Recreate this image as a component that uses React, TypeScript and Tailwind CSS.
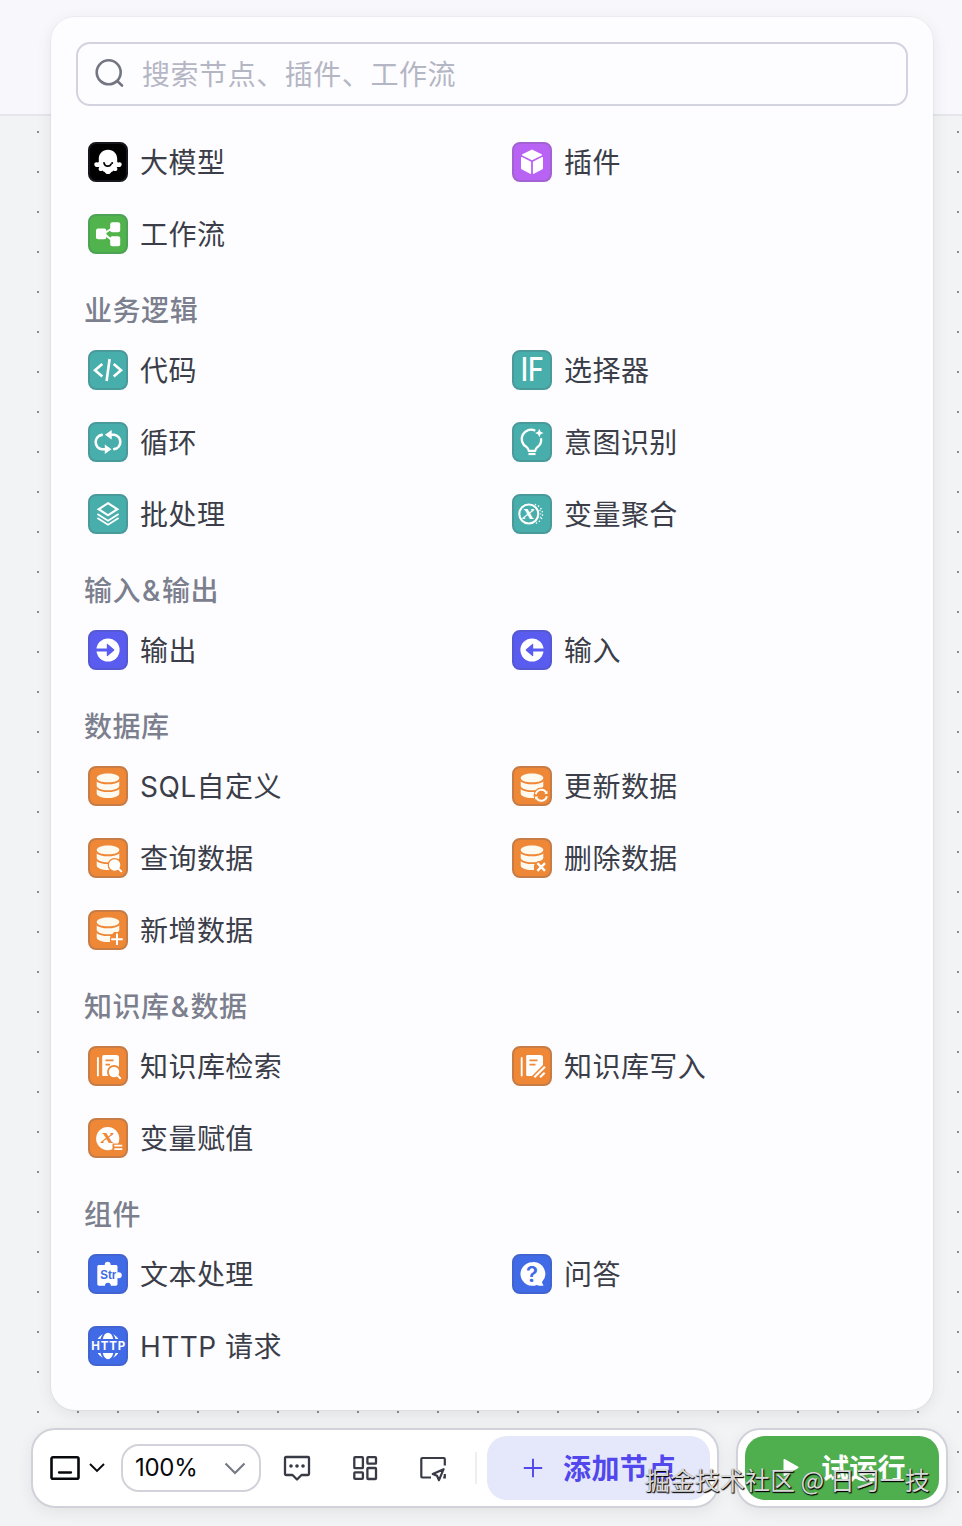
import type { ReactNode } from 'react';

const DB_TOP = 'M8.7 11.9c0-2.5 5-4.4 11.3-4.4s11.3 1.9 11.3 4.4-5 4.4-11.3 4.4S8.7 14.4 8.7 11.9z';
const DB_MID = 'M8.7 15.2c1.6 1.9 6 3.1 11.3 3.1s9.7-1.2 11.3-3.1v4.6c0 2.6-5 4.5-11.3 4.5s-11.3-1.9-11.3-4.5z';
const DB_LOW = 'M8.7 22.9c1.6 1.9 6 3.1 11.3 3.1s9.7-1.2 11.3-3.1v4.6c0 2.6-5 4.5-11.3 4.5s-11.3-1.9-11.3-4.5z';

const ORANGE = '#ee8736';
const BLUE = '#416be6';

function Database() {
  return (
    <g fill="#fffaf0">
      <path d={DB_TOP} />
      <path d={DB_MID} />
      <path d={DB_LOW} />
    </g>
  );
}

const glyphs: Record<string, ReactNode> = {
  llm: (
    <>
      <path fill="#fff" d="M20 7.800c-5.500 0-9.200 4-9.200 9v3c0 .6-.6.9-1.400.7-1.700-.5-3.100.4-3.100 1.900 0 1.700 1.500 2.700 3.500 2.600h1.600c-.9 1-1 2.300-.4 3.200.8 1.100 2.400 1.200 3.600.3.400.9 1.200 1.400 2.100 1.400.5 1.200 1.700 2.100 3.300 2.100s2.800-.9 3.300-2.100c.9 0 1.700-.5 2.100-1.400 1.200.9 2.800.8 3.600-.3.600-.9.500-2.200-.4-3.200h1.600c2 .1 3.500-.9 3.500-2.600 0-1.500-1.400-2.400-3.100-1.900-.8.2-1.400-.1-1.400-.7v-3c0-5-3.700-9-9.200-9z" />
      <path d="M16 20.800c.4 2.200 1.800 3.400 3.800 3.400 1.600 0 2.700-.8 3.300-2.100" fill="none" stroke="#000" strokeWidth="1.700" strokeLinecap="round" />
      <circle cx="24.200" cy="21" r="1" fill="#000" />
    </>
  ),
  plugin: (
    <g fill="#fff">
      <path d="M19 7.900a2 2 0 0 1 2 0l8.600 4.300c.5.300.5.900 0 1.200L20 18.300l-9.600-4.900c-.5-.3-.5-.9 0-1.200z" />
      <path d="M9 15.600c0-.5.500-.8 1-.6l9.100 4.700v11.500c0 .6-.5.900-1 .6L10 27.500c-.7-.4-1-.9-1-1.600z" />
      <path d="M31 15.600c0-.5-.5-.8-1-.6l-9.100 4.700v11.500c0 .6.500.9 1 .6l8.100-4.300c.7-.4 1-.9 1-1.600z" />
    </g>
  ),
  workflow: (
    <g fill="#fff">
      <rect x="8" y="14.500" width="10.300" height="10.800" rx="2" />
      <rect x="22.200" y="8.200" width="10" height="10" rx="2" />
      <rect x="22.200" y="22.200" width="10" height="10" rx="2" />
      <path d="M23 15l-7 4.500 7 6" fill="none" stroke="#fff" strokeWidth="1.900" />
    </g>
  ),
  code: (
    <path d="M14.300 14l-7.300 6.300 7.300 6.300M25.700 14l7.300 6.300-7.300 6.300M21.600 9l-3 22" fill="none" stroke="#fff" strokeWidth="2.600" />
  ),
  selector: (
    <text x="8.800" y="31.400" textLength="23" lengthAdjust="spacingAndGlyphs" fontSize="32" fontWeight="500" fontFamily="Inter, sans-serif" fill="#fff">IF</text>
  ),
  loop: (
    <>
      <path d="M13.800 12.900a7.300 7.300 0 0 0 0 14.400H18M26.200 27.100a7.300 7.300 0 0 0 0-14.400H22" fill="none" stroke="#fff" strokeWidth="2.600" strokeLinecap="round" />
      <path d="M23.700 8v9.400l-6.700-4.700zM16.800 22.600V32l6.700-4.700z" fill="#fff" />
    </>
  ),
  intent: (
    <>
      <path d="M23.300 8.800A9.200 9.200 0 0 0 14.600 25.100c1.500 1.200 2 2 2.200 3.700h6.400c.2-1.700.7-2.500 2.200-3.700a9.200 9.200 0 0 0 3.600-8.900" fill="none" stroke="#fff" strokeWidth="2.300" strokeLinejoin="round" />
      <path d="M16.500 32h7" stroke="#fff" strokeWidth="2.200" />
      <path d="M27.300 6.700l1.300 3 3 1.300-3 1.300-1.300 3-1.300-3-3-1.300 3-1.300z" fill="#fff" />
    </>
  ),
  batch: (
    <g fill="none" stroke="#fff">
      <path d="M20 9.200l9.300 6L20 21.300l-9.300-6.100z" strokeWidth="2.200" />
      <path d="M9.400 20l10.600 6.800L30.600 20M9.400 24l10.600 6.800L30.600 24" strokeWidth="1.800" />
    </g>
  ),
  aggregate: (
    <>
      <circle cx="16.800" cy="20" r="9.500" fill="none" stroke="#fff" strokeWidth="2.100" />
      <path d="M23.500 10.600a9.800 9.800 0 0 1 0 18.800" fill="none" stroke="#fff" strokeWidth="1.600" strokeDasharray="0 3.400" strokeLinecap="round" />
      <path d="M28 16.500a9 9 0 0 1 0 7.500" fill="none" stroke="#fff" strokeWidth="1.300" strokeDasharray="0 3.400" strokeLinecap="round" />
      <text x="10.600" y="24.500" textLength="12" lengthAdjust="spacingAndGlyphs" fontSize="20" fontWeight="700" fontStyle="italic" fontFamily="Liberation Serif, serif" fill="#fff">x</text>
    </>
  ),
  output: (
    <>
      <circle cx="20" cy="20" r="11.600" fill="#fff" />
      <path d="M7 18.600h11.800v-4.200c0-.6.500-.8.900-.4l6.500 5.500c.3.300.3.700 0 1l-6.500 5.500c-.4.400-.9.200-.9-.4v-4.200H7z" fill="#5a5cf0" />
    </>
  ),
  input: (
    <>
      <circle cx="20" cy="20" r="11.600" fill="#fff" />
      <path d="M33 18.600H21.200v-4.200c0-.6-.5-.8-.9-.4l-6.500 5.500c-.3.300-.3.700 0 1l6.500 5.500c.4.400.9.200.9-.4v-4.200H33z" fill="#5a5cf0" />
    </>
  ),
  sql: <Database />,
  dbUpdate: (
    <>
      <Database />
      <circle cx="29.300" cy="29.300" r="7.700" fill={ORANGE} />
      <path d="M23.800 28.300a5.600 5.600 0 0 1 10.300-1.800M34.800 30.300a5.600 5.600 0 0 1-10.300 1.800" fill="none" stroke="#fff" strokeWidth="2" />
      <path d="M32.300 28h3.200v-3.200zM26.300 30.600h-3.200v3.200z" fill="#fff" />
    </>
  ),
  dbQuery: (
    <>
      <Database />
      <circle cx="26.600" cy="27" r="7" fill={ORANGE} />
      <circle cx="26.600" cy="27" r="5.700" fill="#fff" />
      <path d="M30 30.200l3.300 3.200" stroke="#fff" strokeWidth="2" strokeLinecap="round" />
    </>
  ),
  dbDelete: (
    <>
      <Database />
      <path d="M22 36v-9l4-4h8v13z" fill={ORANGE} />
      <path d="M25.400 25.100l7.600 7.800M33 25.100l-7.600 7.800" stroke="#fff" strokeWidth="2.300" />
    </>
  ),
  dbAdd: (
    <>
      <Database />
      <path d="M22 36v-9l4-5h8v14z" fill={ORANGE} />
      <path d="M29 23.500v11.600M23.200 29.300h11.600" stroke="#fff" strokeWidth="2" />
    </>
  ),
  kbSearch: (
    <>
      <path d="M9.900 12v17.500" stroke="#fff" strokeWidth="1.900" strokeLinecap="round" />
      <path d="M16 9h12.500A2.500 2.500 0 0 1 31 11.500V30H15.500c-.8 0-1.300-.5-1.300-1.300V11c0-1.200.7-2 1.800-2z" fill="#fff" />
      <path d="M17.500 14.300h8M17.500 18.700h4.500" stroke={ORANGE} strokeWidth="1.800" />
      <circle cx="26" cy="26" r="7" fill={ORANGE} />
      <circle cx="26" cy="26" r="5.200" fill="#fff" />
      <path d="M29 29l3.200 3.200" stroke="#fff" strokeWidth="2" strokeLinecap="round" />
    </>
  ),
  kbWrite: (
    <>
      <path d="M9.700 12v17.500" stroke="#fff" strokeWidth="1.900" strokeLinecap="round" />
      <path d="M15.500 9h13c1.500 0 2.500 1 2.500 2.500v8L20.500 30h-5c-.8 0-1.300-.5-1.300-1.300V10.300c0-.8.500-1.300 1.300-1.300z" fill="#fff" />
      <path d="M17.500 14.300h8M17.500 18.700h6" stroke={ORANGE} strokeWidth="1.800" />
      <path d="M20.500 33L35 18.500" stroke={ORANGE} strokeWidth="5" />
      <path d="M22.300 31.300L33 20.800M28 31.300l4.700-4.500" stroke="#fff" strokeWidth="2.200" />
    </>
  ),
  assign: (
    <>
      <circle cx="19.700" cy="20.600" r="11.600" fill="#fff" />
      <text x="13" y="25.300" textLength="13" lengthAdjust="spacingAndGlyphs" fontSize="22" fontWeight="700" fontStyle="italic" fontFamily="Liberation Serif, serif" fill={ORANGE}>x</text>
      <path d="M24.500 25.500h11v8h-11z" fill={ORANGE} />
      <path d="M26.300 27.600h8M26.300 31.200h8" stroke="#fff" strokeWidth="1.700" />
    </>
  ),
  text: (
    <>
      <path d="M11 11h5.700c0-2 1.200-3.200 3-3.200s3 1.200 3 3.200h5.100c1 0 1.700.7 1.700 1.700v5.800c2.400-.8 4.300.5 4.300 2.800s-1.900 3.600-4.300 2.800v5.900c0 1-.7 1.700-1.700 1.700h-5c0-2-1-3-2.900-3S17 29.700 17 31.700h-6c-1 0-1.700-.7-1.700-1.700V12.700c0-1 .7-1.700 1.700-1.700z" fill="#fff" />
      <text x="12.300" y="25.200" textLength="16" lengthAdjust="spacingAndGlyphs" fontSize="12" fontWeight="700" fontFamily="Liberation Sans, sans-serif" fill={BLUE}>Str</text>
    </>
  ),
  qa: (
    <>
      <path d="M20 8.200a11.800 11.800 0 1 0 4.800 22.700c2 .8 4 1 6.200.8.500 0 .6-.4.300-.7-.8-.9-1.200-1.900-1.300-3A11.800 11.800 0 0 0 20 8.200z" fill="#fff" />
      <text x="20" y="27.600" textAnchor="middle" fontSize="22" fontWeight="600" fontFamily="Inter, sans-serif" fill={BLUE}>?</text>
    </>
  ),
  http: (
    <>
      <g fill="#fff">
        <path d="M14.800 13c.8-4 2.800-6.200 5.200-6.200s4.400 2.200 5.200 6.200zM14.800 27c.8 4 2.800 6.200 5.200 6.200s4.400-2.200 5.200-6.200z" />
        <path d="M9.700 13c1.300-2 3-3.700 5.200-4.700-1.200 1.500-2 3-2.400 4.700zM30.300 13c-1.300-2-3-3.700-5.200-4.700 1.200 1.500 2 3 2.400 4.700zM9.700 27c1.300 2 3 3.700 5.200 4.700-1.200-1.500-2-3-2.400-4.700zM30.300 27c-1.300 2-3 3.700-5.200 4.700 1.200-1.500 2-3 2.400-4.700z" />
      </g>
      <text x="3.200" y="24.100" textLength="34" fontSize="11.500" fontWeight="700" fontFamily="Inter, sans-serif" fill="#fff">HTTP</text>
    </>
  ),
};

type Tone = 'black' | 'purple' | 'green' | 'teal' | 'indigo' | 'orange' | 'blue';

const tones: Record<Tone, string> = {
  black: 'bg-black border-[#15171c]',
  purple: 'bg-[#b963f4] border-[#a362d2]',
  green: 'bg-[#50b34b] border-[#4ca255]',
  teal: 'bg-[#48aeac] border-[#4a9a9b]',
  indigo: 'bg-[#5a5cf0] border-[#5558d3]',
  orange: 'bg-[#ee8736] border-[#c87c45]',
  blue: 'bg-[#416be6] border-[#4264d0]',
};

type Item = { icon: string; label: string };
type Section = { title?: string; groups: { tone: Tone; item: Item }[] };

const of = (tone: Tone, ...items: [string, string][]) =>
  items.map(([icon, label]) => ({ tone, item: { icon, label } }));

const sections: Section[] = [
  { groups: [...of('black', ['llm', '大模型']), ...of('purple', ['plugin', '插件']), ...of('green', ['workflow', '工作流'])] },
  {
    title: '业务逻辑',
    groups: of('teal', ['code', '代码'], ['selector', '选择器'], ['loop', '循环'], ['intent', '意图识别'], ['batch', '批处理'], ['aggregate', '变量聚合']),
  },
  { title: '输入&输出', groups: of('indigo', ['output', '输出'], ['input', '输入']) },
  {
    title: '数据库',
    groups: of('orange', ['sql', 'SQL自定义'], ['dbUpdate', '更新数据'], ['dbQuery', '查询数据'], ['dbDelete', '删除数据'], ['dbAdd', '新增数据']),
  },
  { title: '知识库&数据', groups: of('orange', ['kbSearch', '知识库检索'], ['kbWrite', '知识库写入'], ['assign', '变量赋值']) },
  { title: '组件', groups: of('blue', ['text', '文本处理'], ['qa', '问答'], ['http', 'HTTP 请求']) },
];

function NodeItem({ tone, item }: { tone: Tone; item: Item }) {
  return (
    <div className="flex h-[72px] items-center gap-3 pl-3">
      <div className={`size-10 shrink-0 rounded-lg border-2 ${tones[tone]}`}>
        <svg viewBox="2 2 36 36" className="size-9 overflow-visible">
          {glyphs[item.icon]}
        </svg>
      </div>
      <span className="whitespace-pre pt-0.5 text-[28px] leading-10 tracking-[0.450px] text-[#3b3e49]">{item.label}</span>
    </div>
  );
}

function Panel() {
  return (
    <div className="ml-[51px] mt-[17px] flex h-[1393px] w-[882px] flex-col rounded-[24px] bg-[#fdfdff] px-[25px] pt-[25px] shadow-[0_0_0_1px_rgba(60,60,90,0.04),0_4px_16px_rgba(0,0,0,0.08)]">
      <div className="flex h-16 shrink-0 items-center rounded-[14px] border-2 border-[#d2d3df] px-4">
        <svg viewBox="0 0 32 32" className="size-8" fill="none" stroke="#737583" strokeWidth="2.600" strokeLinecap="round">
          <circle cx="14.700" cy="14.300" r="12" />
          <path d="M23.500 23.300l4.500 4.200" />
        </svg>
        <span className="ml-4 pt-0.5 text-[28px] leading-10 tracking-[0.550px] text-[#b5b6c4]">搜索节点、插件、工作流</span>
      </div>
      <div className="mt-5 w-[848px]">
        {sections.map((s, i) => (
          <section key={i}>
            {s.title && (
              <h3 className="h-16 pl-2 pt-[17px] text-[28px] font-medium leading-[48px] tracking-[0.550px] text-[#7c7f8d]">
                {s.title.split('&').map((part, n) => (
                  <span key={n}>
                    {n > 0 && <span className="pr-px pl-px">&amp;</span>}
                    {part}
                  </span>
                ))}
              </h3>
            )}
            <div className="grid grid-cols-2">
              {s.groups.map((g) => (
                <NodeItem key={g.item.icon} {...g} />
              ))}
            </div>
          </section>
        ))}
      </div>
    </div>
  );
}

function Toolbar() {
  return (
    <div className="ml-[31px] mt-[18px] flex gap-[17px]">
      <div className="flex h-20 w-[688px] items-center rounded-[24px] border-2 border-[#d0d1d9] bg-white pl-4 shadow-[0_4px_16px_rgba(0,0,0,0.07)]">
        <svg viewBox="0 0 32 26" className="h-[26px] w-8" fill="none" stroke="#08090d" strokeWidth="2.600">
          <rect x="2.500" y="2.300" width="27" height="21.400" rx="1.500" />
          <path d="M10 17.500h12" strokeWidth="2.300" strokeLinecap="round" />
        </svg>
        <svg viewBox="0 0 18 12" className="ml-[7px] h-3 w-[18px]" fill="none" stroke="#08090d" strokeWidth="1.900">
          <path d="M2 2l7 7 7-7" />
        </svg>
        <div className="ml-[15px] flex h-12 w-[140px] items-center justify-between rounded-[18px] border-2 border-[#d2d3da] pl-3 pr-[13px]">
          <span className="font-[Inter] text-[24px] leading-8 tracking-[-0.300px] text-[#08090d]">100%</span>
          <svg viewBox="0 0 22 14" className="h-3.5 w-[22px]" fill="none" stroke="#777a84" strokeWidth="2.200">
            <path d="M1.500 2.500l9.500 9.500 9.500-9.500" />
          </svg>
        </div>
        <svg viewBox="0 0 28 28" className="ml-[22px] size-7" fill="none" stroke="#383a45" strokeWidth="2.300">
          <path d="M3 3h22c.6 0 1 .4 1 1v16c0 .6-.4 1-1 1h-6.500L14 25.500 9.500 21H3c-.6 0-1-.4-1-1V4c0-.6.400-1 1-1z" strokeLinejoin="round" />
          <path d="M8 12h.01M14 12h.01M20 12h.01" strokeWidth="3.600" strokeLinecap="round" />
        </svg>
        <svg viewBox="0 0 28 28" className="ml-10 size-7" fill="none" stroke="#383a45" strokeWidth="2.300">
          <rect x="3.300" y="3.200" width="8.600" height="11" rx=".8" />
          <rect x="16.400" y="3.200" width="8.600" height="6.500" rx=".8" />
          <rect x="3.300" y="18.400" width="8.600" height="6.500" rx=".8" />
          <rect x="16.400" y="14" width="8.600" height="11" rx=".8" />
        </svg>
        <svg viewBox="0 0 28 28" className="ml-10 size-7" fill="none" stroke="#383a45" strokeWidth="2.200">
          <path d="M12 23.500H3.300c-.6 0-1-.4-1-1V5c0-.6.400-1 1-1h21.500c.6 0 1 .4 1 1v6.500M25.800 20v3.500h-1.600" />
          <path d="M24.600 15.200l-10.800 4.800 4.200 1.700 2 4.500z" strokeLinejoin="round" />
        </svg>
        <div className="ml-[28px] h-8 w-[2px] bg-[#ededf2]" />
        <div className="ml-[10px] flex h-16 w-[223px] items-center rounded-[20px] bg-[#e5e7fb] pl-9">
          <svg viewBox="0 0 20 20" className="size-5" stroke="#5147ec" strokeWidth="1.900">
            <path d="M10 .8v18.400M.8 10h18.400" />
          </svg>
          <span className="ml-5 pt-0.5 text-[28px] font-semibold leading-10 tracking-[0.400px] text-[#5147ec]">添加节点</span>
        </div>
      </div>
      <div className="flex h-20 w-[212px] items-center rounded-[24px] border-2 border-[#d0d1d9] bg-white pl-[7px] shadow-[0_4px_16px_rgba(0,0,0,0.07)]">
        <div className="flex h-16 w-[194px] items-center rounded-[20px] bg-[#4fae4d] pl-[37px]">
          <svg viewBox="0 0 18 20" className="h-5 w-[18px]" fill="#fff">
            <path d="M1.500 1.700c0-.7.600-1 1.200-.7l13.500 7.700c.6.300.6 1 0 1.300L2.700 18c-.6.300-1.200 0-1.200-.7z" />
          </svg>
          <span className="ml-[21px] pt-0.5 text-[28px] font-semibold leading-10 tracking-[0.300px] text-white">试运行</span>
        </div>
      </div>
    </div>
  );
}

export default function App() {
  return (
    <div className="relative isolate h-[1526px] w-[962px] overflow-hidden bg-[#f2f3f5] font-[Inter,'Noto_Sans_CJK_SC',sans-serif]">
      <div className="absolute inset-0 -z-10">
        <div className="h-[116px] border-b-2 border-[#e5e5ec] bg-[#f8f8fc]" />
        <svg className="h-[1410px] w-full">
          <defs>
            <pattern id="dots" x="37" y="15" width="40" height="40" patternUnits="userSpaceOnUse">
              <rect width="2" height="2" fill="#898b91" />
            </pattern>
          </defs>
          <rect width="962" height="1410" fill="url(#dots)" />
        </svg>
      </div>
      <div className="flex flex-col">
        <Panel />
        <Toolbar />
      </div>
      <div className="absolute left-[645px] top-[1461px] whitespace-pre font-['Noto_Sans_CJK_SC',sans-serif] text-[25px] leading-9 text-[#d8d8d8] [text-shadow:1px_1px_1px_#000,0_1px_1px_rgba(0,0,0,0.7)]">
        掘金技术社区 @ 日习一技
      </div>
    </div>
  );
}
